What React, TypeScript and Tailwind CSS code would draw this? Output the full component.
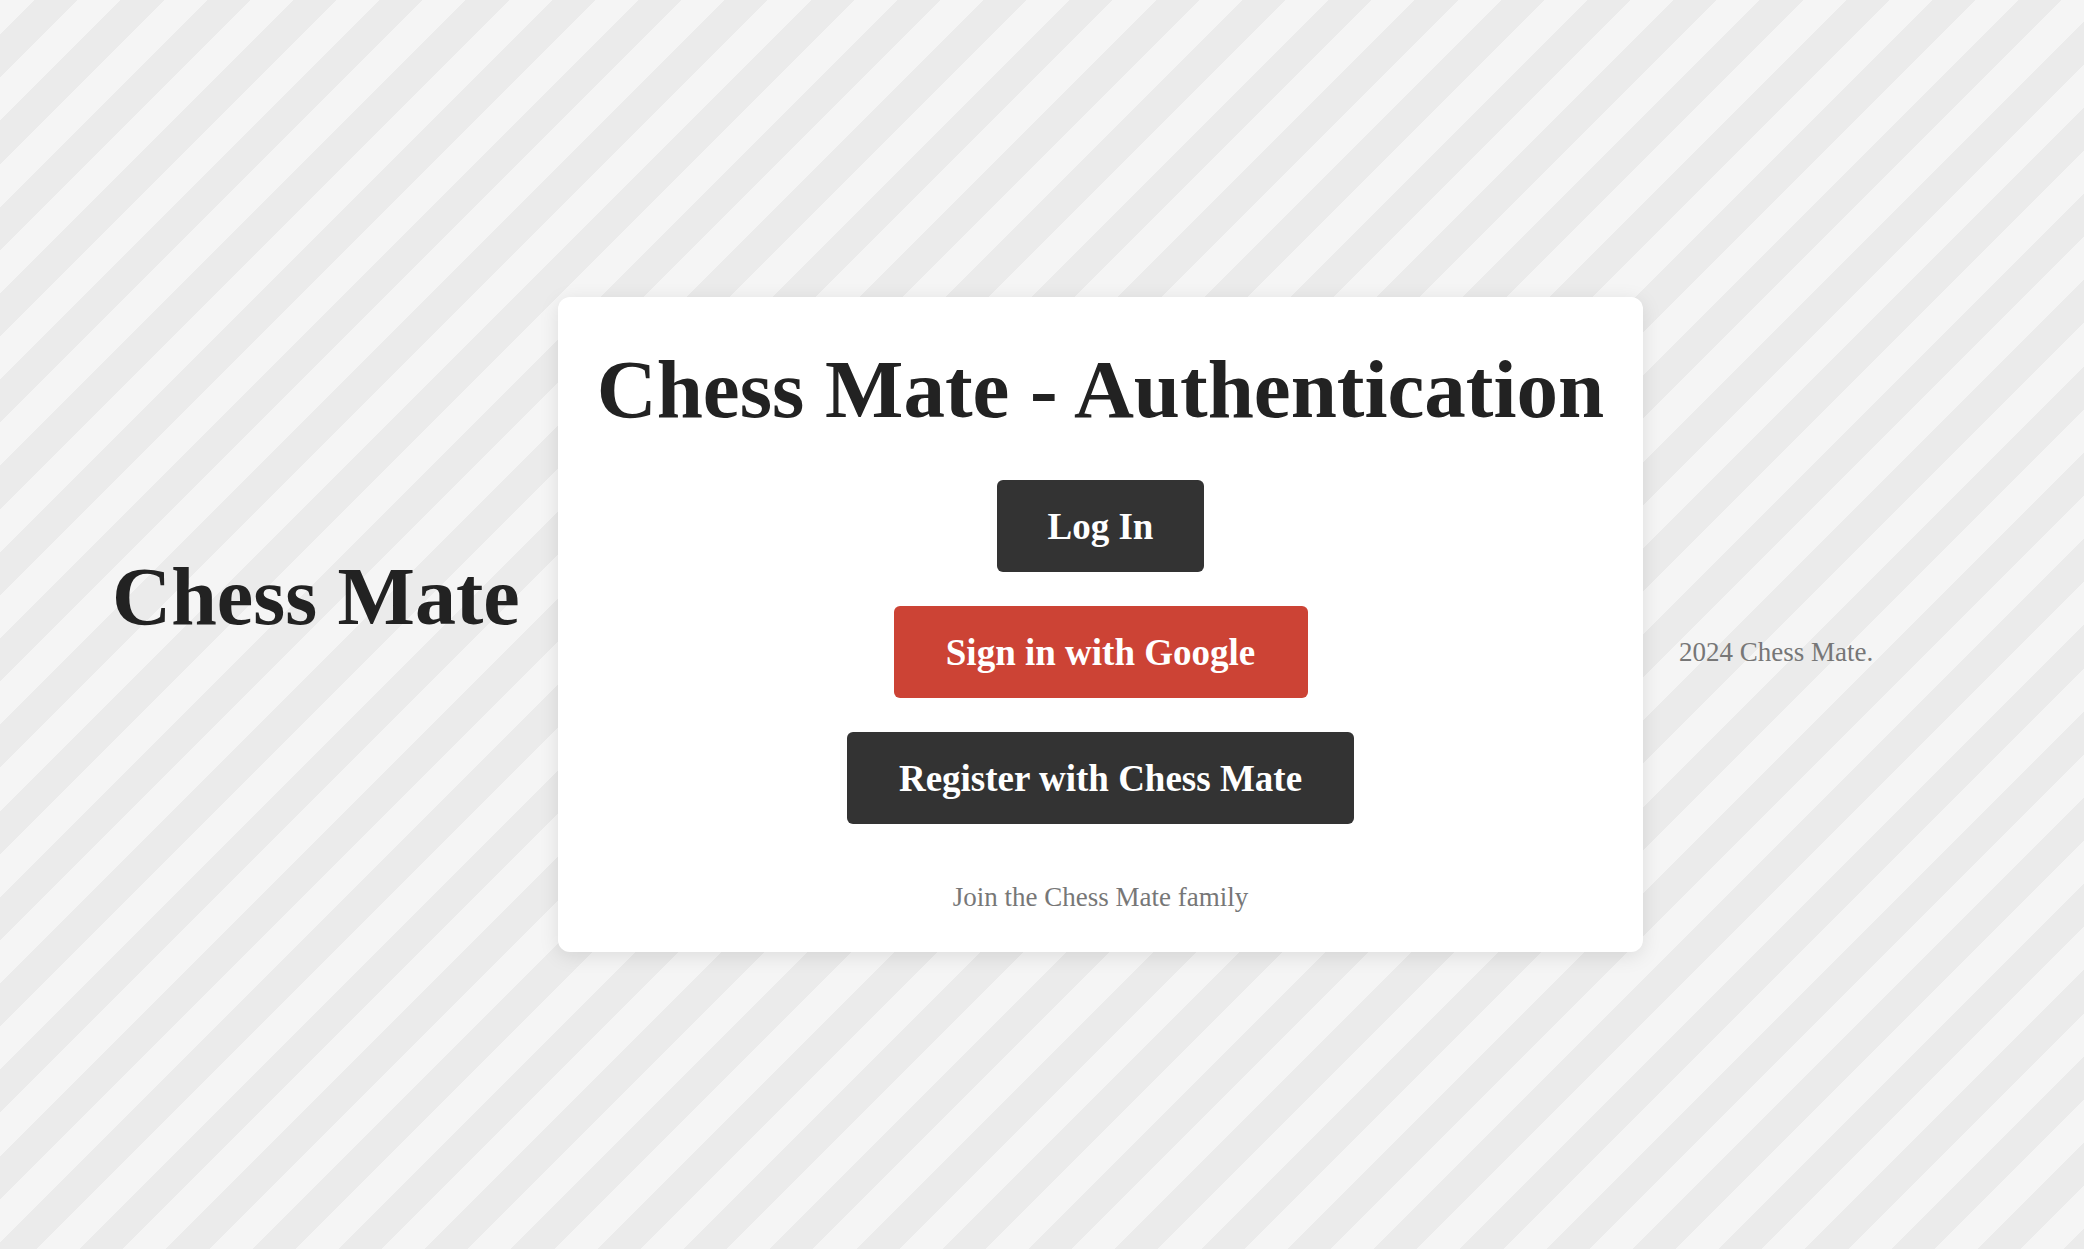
import React from 'react';

const buttons = [
    { label: 'Log In', width: 'w-[207px]', color: 'bg-[#333333]' },
    { label: 'Sign in with Google', width: 'w-[414px]', color: 'bg-[#cc4335]' },
    { label: 'Register with Chess Mate', width: 'w-[507px]', color: 'bg-[#333333]' },
];

export default function App() {
    return (
        <div className="min-h-screen w-full flex items-center pl-[112px] font-['Liberation_Serif',serif] bg-[repeating-linear-gradient(135deg,#f5f5f5_0px,#f5f5f5_24.5px,#ebebeb_24.5px,#ebebeb_55px,#f5f5f5_55px,#f5f5f5_61px)]">
            {/* Brand */}
            <h1 className="w-[409px] shrink-0 mb-[55px] text-[82px] leading-none font-bold text-[#222222] whitespace-nowrap">
                Chess Mate
            </h1>

            {/* Auth card */}
            <div className="ml-[37px] w-[1085px] shrink-0 bg-white rounded-xl shadow-[0_4px_20px_rgba(0,0,0,0.1)] pt-[51px] pb-[41px] flex flex-col items-center">
                <h2 className="text-[83px] leading-none font-bold text-[#222222] whitespace-nowrap">
                    Chess Mate - Authentication
                </h2>
                <div className="mt-[49px] flex flex-col items-center gap-[34px]">
                    {buttons.map(b => (
                        <button
                            key={b.label}
                            className={`${b.width} ${b.color} h-[92px] rounded-md flex items-center justify-center text-white text-[37px] leading-none font-bold whitespace-nowrap`}
                        >
                            {b.label}
                        </button>
                    ))}
                </div>
                <p className="mt-[60px] text-[27px] leading-none text-[#777777]">Join the Chess Mate family</p>
            </div>

            {/* Footer */}
            <p className="ml-[36px] mt-[55px] text-[27px] leading-none text-[#777777] whitespace-nowrap">
                2024 Chess Mate.
            </p>
        </div>
    );
}
